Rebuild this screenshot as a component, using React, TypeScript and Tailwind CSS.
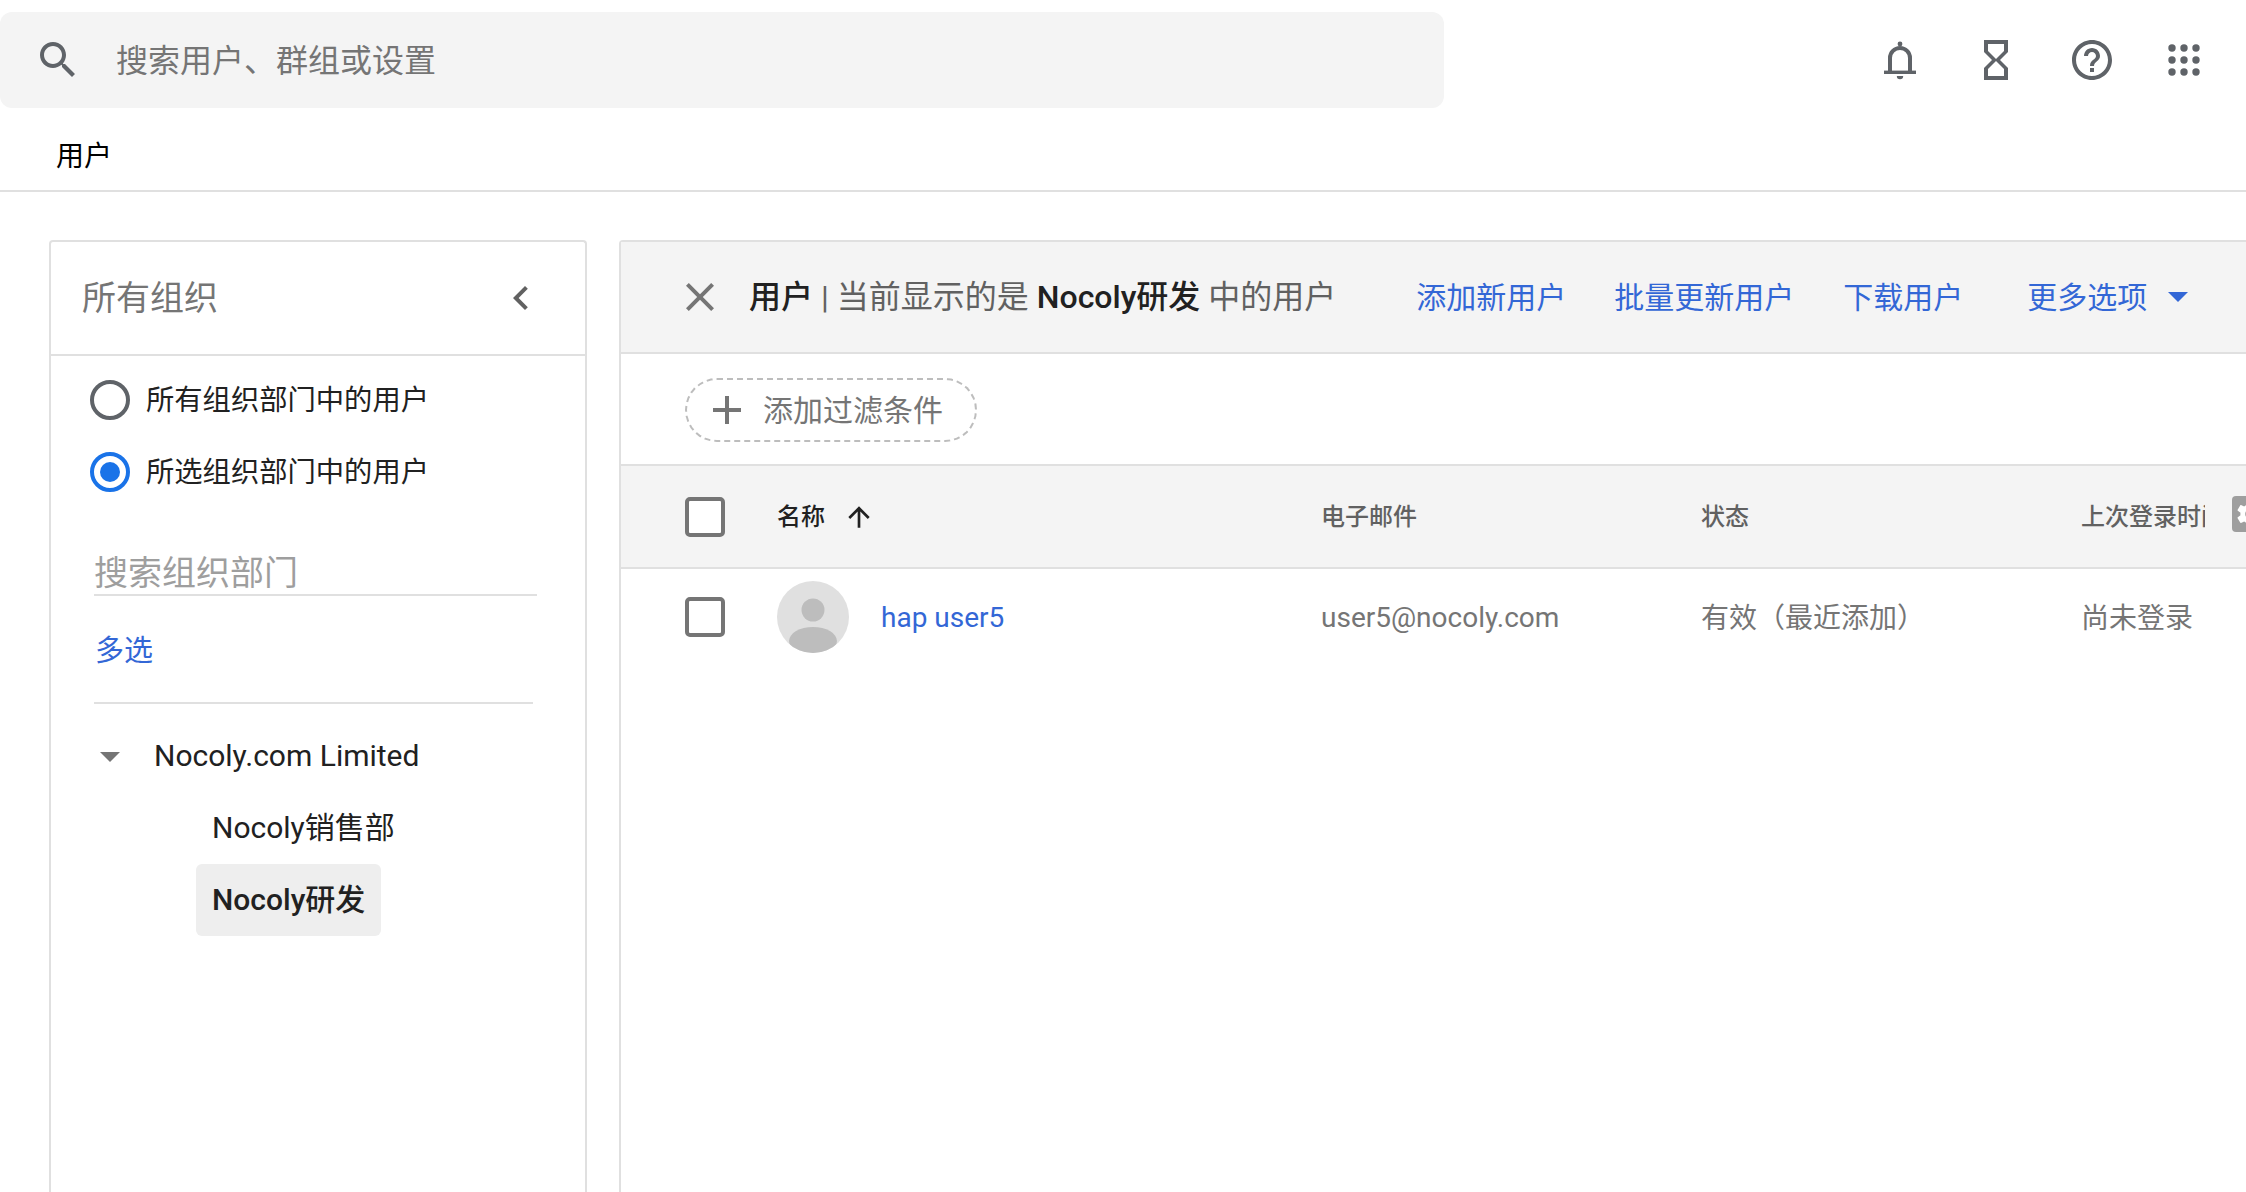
import React from "react";

const font = { fontFamily: '"Roboto", "Noto Sans CJK SC", sans-serif' };

function Mat({ d, className }: { d: string; className?: string }) {
  return (
    <svg viewBox="0 0 24 24" className={className} fill="currentColor">
      <path d={d} />
    </svg>
  );
}

const Bell = () => (
  <svg viewBox="0 0 24 24" className="w-12 h-12 text-[#5f6368]" fill="none">
    <circle cx="12" cy="4" r="1.2" fill="currentColor" />
    <path d="M7 17.5V11a5 5 0 0 1 10 0v6.5" stroke="currentColor" strokeWidth="2" />
    <path d="M4 17.3h16V19H4z" fill="currentColor" />
    <path d="M10.4 20h3.2a1.6 1.6 0 0 1-3.2 0z" fill="currentColor" />
  </svg>
);

const Apps = () => (
  <svg viewBox="0 0 48 48" className="w-12 h-12 text-[#5f6368]" fill="currentColor">
    {[12, 24, 36].map((y) =>
      [12, 24, 36].map((x) => <circle key={`${x}-${y}`} cx={x} cy={y} r="3.7" />)
    )}
  </svg>
);

const Checkbox = () => (
  <div className="w-10 h-10 rounded-[5px] border-4 border-[#757575] bg-white" />
);

const gridCols = "grid grid-cols-[92px_544px_380px_380px_124px] pl-[64px]";

export default function App() {
  return (
    <div className="relative w-[2246px] h-[1192px] overflow-hidden bg-white flex flex-col" style={font}>
      {/* top bar */}
      <div className="flex items-start pt-3 h-[108px] shrink-0">
        <div className="w-[1444px] h-[96px] rounded-xl bg-[#f4f4f4] flex items-center pl-[34px]">
          <Mat
            className="w-12 h-12 text-[#5f6368] shrink-0"
            d="M15.5 14h-.79l-.28-.27C15.41 12.59 16 11.11 16 9.5 16 5.91 13.09 3 9.5 3S3 5.91 3 9.5 5.91 16 9.5 16c1.61 0 3.09-.59 4.23-1.57l.27.28v.79l5 4.99L20.49 19l-4.99-5zm-6 0C7.01 14 5 11.99 5 9.5S7.01 5 9.5 5 14 7.01 14 9.5 11.99 14 9.5 14z"
          />
          <span className="ml-[34px] pt-[2px] text-[32px] text-[#757575]">搜索用户、群组或设置</span>
        </div>
        <div className="flex items-center h-12 mt-6 ml-[432px]">
          <Bell />
          <Mat
            className="w-12 h-12 text-[#5f6368] ml-[48px]"
            d="M6 2v6h.01L6 8.01 10 12l-4 4 .01.01H6V22h12v-5.99h-.01L18 16l-4-4 4-3.99-.01-.01H18V2H6zm10 14.5V20H8v-3.5l4-4 4 4zm-4-5l-4-4V4h8v3.5l-4 4z"
          />
          <Mat
            className="w-12 h-12 text-[#5f6368] ml-[48px]"
            d="M11 18h2v-2h-2v2zm1-16C6.48 2 2 6.48 2 12s4.48 10 10 10 10-4.48 10-10S17.52 2 12 2zm0 18c-4.41 0-8-3.59-8-8s3.59-8 8-8 8 3.59 8 8-3.59 8-8 8zm0-14c-2.21 0-4 1.79-4 4h2c0-1.1.9-2 2-2s2 .9 2 2c0 2-3 1.75-3 5h2c0-2.25 3-2.5 3-5 0-2.21-1.79-4-4-4z"
          />
          <div className="ml-[44px]">
            <Apps />
          </div>
        </div>
      </div>

      {/* tab row */}
      <div className="h-[84px] shrink-0 border-b-2 border-[#e0e0e0] flex items-center pl-[56px] pt-[16px]">
        <span className="text-[28px] text-black">用户</span>
      </div>

      {/* main */}
      <div className="flex flex-1 min-h-0 pt-[48px] pl-[49px]">
        {/* left panel */}
        <div className="w-[538px] shrink-0 border-2 border-b-0 border-[#e0e0e0] rounded-t-[4px] flex flex-col">
          <div className="h-[114px] shrink-0 border-b-2 border-[#e0e0e0] flex items-center justify-between pl-[31px] pr-[40px]">
            <span className="pt-[1px] text-[34px] text-[#757575]">所有组织</span>
            <Mat
              className="w-12 h-12 text-[#616161]"
              d="M15.41 7.41L14 6l-6 6 6 6 1.41-1.41L10.83 12z"
            />
          </div>

          <div className="pl-[39px] pt-[24px]">
            <div className="flex items-center h-[40px]">
              <div className="w-10 h-10 rounded-full border-4 border-[#5f6368]" />
              <span className="ml-[16px] pt-[3px] text-[28.3px] text-[#212121]">所有组织部门中的用户</span>
            </div>
            <div className="flex items-center h-[40px] mt-[32px]">
              <div className="w-10 h-10 rounded-full border-4 border-[#1a73e8] flex items-center justify-center">
                <div className="w-5 h-5 rounded-full bg-[#1a73e8]" />
              </div>
              <span className="ml-[16px] pt-[3px] text-[28.3px] text-[#212121]">所选组织部门中的用户</span>
            </div>
          </div>

          <div className="ml-[43px] w-[443px] mt-[54px] h-[50px] border-b-2 border-[#e0e0e0] flex items-end">
            <span className="text-[34px] leading-[50px] translate-y-[4px] text-[#9e9e9e]">搜索组织部门</span>
          </div>

          <div className="ml-[44px] mt-[35px] text-[29px] leading-[40px] text-[#3367d6]">多选</div>

          <div className="ml-[43px] w-[439px] mt-[31px] border-t-2 border-[#e0e0e0]" />

          <div className="mt-[31px] ml-[43px] flex items-center h-[44px]">
            <div className="ml-[6px] w-0 h-0 border-x-[10px] border-x-transparent border-t-[10px] border-t-[#757575]" />
            <span className="ml-[34px] pb-[3px] text-[30px] text-[#212121]">Nocoly.com Limited</span>
          </div>
          <div className="mt-[28px] ml-[161px] h-[44px] pb-[4px] flex items-center text-[30px] text-[#212121]">
            Nocoly销售部
          </div>
          <div className="mt-[13px] ml-[145px] w-[185px] h-[72px] rounded-[6px] bg-[#eeeeee] flex items-center pl-[16px] pb-[2px] text-[30px] font-medium text-[#212121]">
            Nocoly研发
          </div>
        </div>

        {/* right panel */}
        <div className="ml-[32px] flex-1 min-w-0 border-l-2 border-t-2 border-[#e0e0e0] rounded-tl-[4px] flex flex-col">
          <div className="h-[112px] shrink-0 bg-[#f4f4f4] border-b-2 border-[#e0e0e0] flex items-center">
            <Mat
              className="ml-[55px] w-12 h-12 text-[#757575] shrink-0"
              d="M19 6.41L17.59 5 12 10.59 6.41 5 5 6.41 10.59 12 5 17.59 6.41 19 12 13.41 17.59 19 19 17.59 13.41 12z"
            />
            <div className="ml-[25px] text-[32px] text-[#616161] whitespace-nowrap">
              <span className="font-medium text-[#212121]">用户</span>
              <span className="mx-[8px]">|</span>
              <span>当前显示的是 </span>
              <span className="font-medium text-[#212121]">Nocoly研发</span>
              <span> 中的用户</span>
            </div>
            <div className="ml-[80px] flex items-center text-[30px] text-[#3367d6] whitespace-nowrap">
              <span>添加新用户</span>
              <span className="ml-[48px]">批量更新用户</span>
              <span className="ml-[49px]">下载用户</span>
              <span className="ml-[64px]">更多选项</span>
              <div className="ml-[21px] w-0 h-0 border-x-[10px] border-x-transparent border-t-[10px] border-t-[#3367d6]" />
            </div>
          </div>

          <div className="h-[112px] shrink-0 border-b-2 border-[#e0e0e0] pl-[64px] pt-[24px]">
            <div className="w-[292px] h-[64px] rounded-full border-2 border-dashed border-[#bdbdbd] flex items-center pl-[16px]">
              <Mat
                className="w-12 h-12 text-[#757575] shrink-0"
                d="M19 13h-6v6h-2v-6H5v-2h6V5h2v6h6v2z"
              />
              <span className="ml-[12px] text-[30px] text-[#757575]">添加过滤条件</span>
            </div>
          </div>

          <div className={`${gridCols} h-[103px] shrink-0 bg-[#f4f4f4] border-b-2 border-[#e0e0e0] items-center`}>
            <Checkbox />
            <div className="flex items-center text-[24px] font-medium text-[#212121]">
              <span>名称</span>
              <Mat
                className="ml-[18px] w-8 h-8 text-[#212121]"
                d="M4 12l1.41 1.41L11 7.83V20h2V7.83l5.58 5.59L20 12l-8-8-8 8z"
              />
            </div>
            <div className="text-[24px] font-medium text-[#616161]">电子邮件</div>
            <div className="text-[24px] font-medium text-[#616161]">状态</div>
            <div className="text-[24px] font-medium text-[#616161] overflow-hidden whitespace-nowrap">
              上次登录时间
            </div>
          </div>

          <div className={`${gridCols} h-[96px] shrink-0 items-center`}>
            <Checkbox />
            <div className="flex items-center">
              <svg viewBox="0 0 72 72" className="w-[72px] h-[72px] shrink-0">
                <clipPath id="avatar-clip">
                  <circle cx="36" cy="36" r="36" />
                </clipPath>
                <circle cx="36" cy="36" r="36" fill="#e0e0e0" />
                <g clipPath="url(#avatar-clip)">
                  <circle cx="36" cy="29" r="11.5" fill="#bdbdbd" />
                  <ellipse cx="36" cy="60" rx="24" ry="14" fill="#bdbdbd" />
                </g>
              </svg>
              <span className="ml-[32px] pt-[2px] text-[28px] text-[#3367d6]">hap user5</span>
            </div>
            <div className="pt-[2px] text-[28px] text-[#757575]">user5@nocoly.com</div>
            <div className="pt-[3px] text-[28px] text-[#757575] whitespace-nowrap">有效（最近添加）</div>
            <div className="pt-[3px] text-[28px] text-[#757575] whitespace-nowrap">尚未登录</div>
          </div>
        </div>
      </div>

      {/* settings gear hanging over the table header's right edge */}
      <div className="absolute left-[2232px] top-[496px] w-[36px] h-[36px] rounded-[4px] bg-[#9e9e9e] flex items-center justify-center overflow-hidden">
        <Mat
          className="w-8 h-8 text-white"
          d="M19.14 12.94c.04-.3.06-.61.06-.94 0-.32-.02-.64-.07-.94l2.03-1.58a.49.49 0 0 0 .12-.61l-1.92-3.32a.488.488 0 0 0-.59-.22l-2.39.96c-.5-.38-1.03-.7-1.62-.94l-.36-2.54a.484.484 0 0 0-.48-.41h-3.84c-.24 0-.43.17-.47.41l-.36 2.54c-.59.24-1.13.57-1.62.94l-2.39-.96c-.22-.08-.47 0-.59.22L2.74 8.87c-.12.21-.08.47.12.61l2.03 1.58c-.05.3-.09.63-.09.94s.02.64.07.94l-2.03 1.58a.49.49 0 0 0-.12.61l1.92 3.32c.12.22.37.29.59.22l2.39-.96c.5.38 1.03.7 1.62.94l.36 2.54c.05.24.24.41.48.41h3.84c.24 0 .44-.17.47-.41l.36-2.54c.59-.24 1.13-.56 1.62-.94l2.39.96c.22.08.47 0 .59-.22l1.92-3.32c.12-.22.07-.47-.12-.61l-2.01-1.58zM12 15.6c-1.98 0-3.6-1.62-3.6-3.6s1.62-3.6 3.6-3.6 3.6 1.62 3.6 3.6-1.62 3.6-3.6 3.6z"
        />
      </div>
    </div>
  );
}
